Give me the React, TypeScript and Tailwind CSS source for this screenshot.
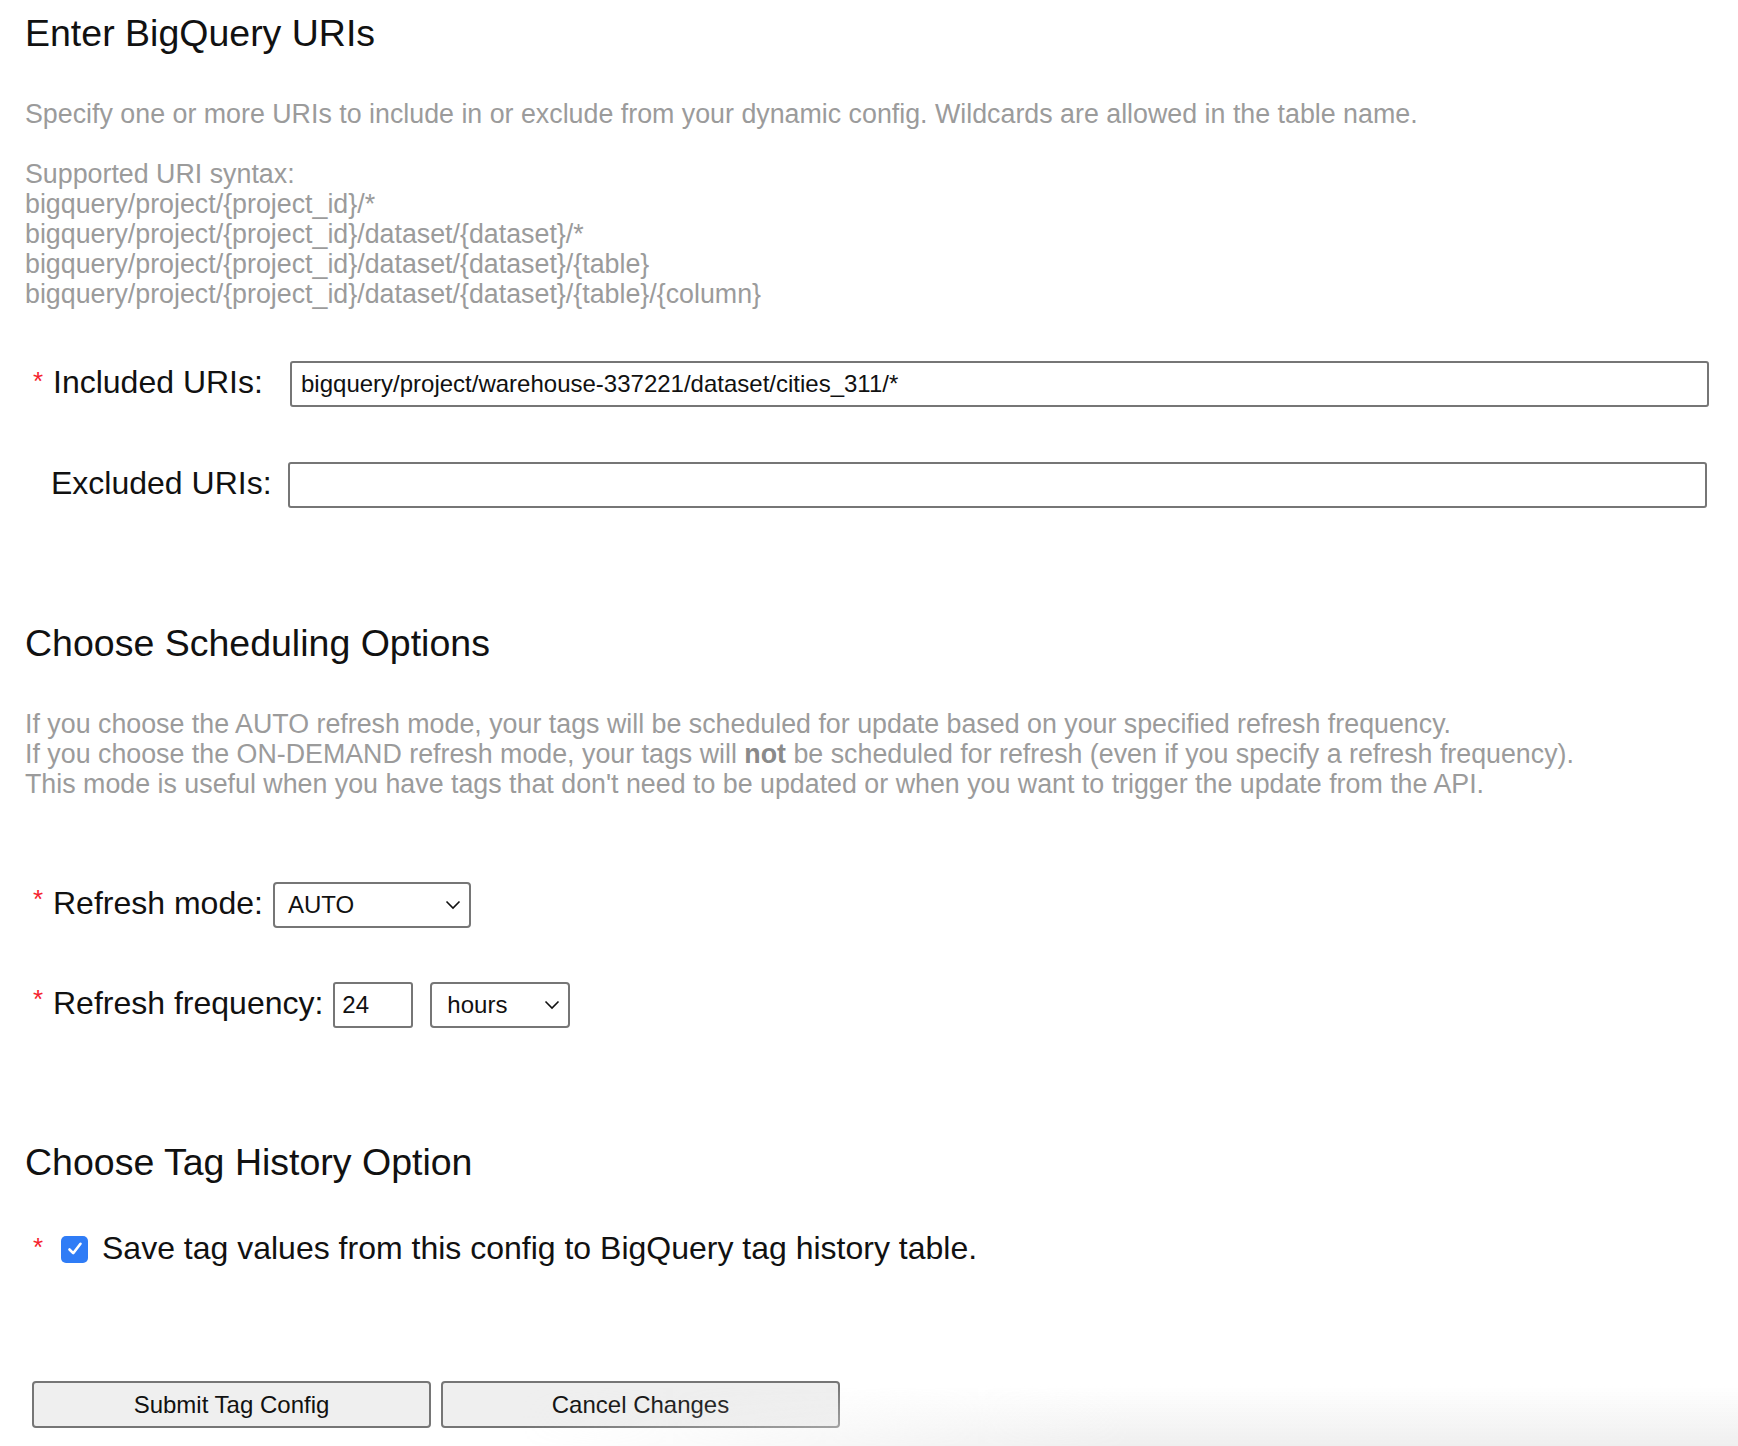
import React from "react";

const Req = () => (
  <span className="text-[#f5222d] text-[26px] leading-none w-[20px] self-start mt-[4px] inline-block">*</span>
);

const Chevron = () => (
  <svg width="16" height="10" viewBox="0 0 16 10" className="absolute right-[8px] top-1/2 -translate-y-1/2 pointer-events-none">
    <path d="M1.5 1.5 L8 8 L14.5 1.5" fill="none" stroke="#111" strokeWidth="1.6" />
  </svg>
);

export default function App() {
  return (
    <div
      className="relative min-h-[1446px] bg-white text-[#111] overflow-hidden"
      style={{ fontFamily: '"Liberation Sans", Arial, Helvetica, sans-serif' }}
    >
      <div className="pl-[25px] pt-[12px]">
        <h1 className="text-[37.5px] leading-[42px] font-normal">Enter BigQuery URIs</h1>
        <p className="mt-[45px] text-[26.8px] leading-[30px] text-[#9b9b9b]">
          Specify one or more URIs to include in or exclude from your dynamic config. Wildcards are allowed in the table name.
        </p>
        <div className="mt-[30px] text-[26.8px] leading-[30px] text-[#9b9b9b]">
          <div>Supported URI syntax:</div>
          <div>bigquery/project/{"{project_id}"}/*</div>
          <div>bigquery/project/{"{project_id}"}/dataset/{"{dataset}"}/*</div>
          <div>bigquery/project/{"{project_id}"}/dataset/{"{dataset}"}/{"{table}"}</div>
          <div>bigquery/project/{"{project_id}"}/dataset/{"{dataset}"}/{"{table}"}/{"{column}"}</div>
        </div>
      </div>

      <div className="mt-[52px] flex items-center pl-[33px] pr-[29px]">
        <div className="flex items-center w-[257px] shrink-0">
          <Req />
          <span className="text-[32px] leading-[36px] pb-[5px]">Included URIs:</span>
        </div>
        <div className="flex-1 h-[46px] border-2 border-[#767676] rounded-[3px] flex items-center pl-[9px] text-[24px]">
          bigquery/project/warehouse-337221/dataset/cities_311/*
        </div>
      </div>

      <div className="mt-[55px] flex items-center pl-[51px] pr-[31px]">
        <div className="w-[237px] shrink-0 text-[32px] leading-[36px] pb-[5px]">Excluded URIs:</div>
        <div className="flex-1 h-[46px] border-2 border-[#767676] rounded-[3px]" />
      </div>

      <div className="pl-[25px]">
        <h2 className="mt-[114px] text-[37.5px] leading-[42px] font-normal">Choose Scheduling Options</h2>
        <div className="mt-[45px] text-[26.8px] leading-[30px] text-[#9b9b9b]">
          <div>If you choose the AUTO refresh mode, your tags will be scheduled for update based on your specified refresh frequency.</div>
          <div>
            If you choose the ON-DEMAND refresh mode, your tags will <span className="font-bold text-[#8a8a8a]">not</span> be scheduled for refresh (even if you specify a refresh frequency).
          </div>
          <div>This mode is useful when you have tags that don't need to be updated or when you want to trigger the update from the API.</div>
        </div>
      </div>

      <div className="mt-[83px] flex items-center pl-[33px]">
        <Req />
        <span className="text-[32px] leading-[36px] pb-[5px]">Refresh mode:</span>
        <div className="relative ml-[10px] w-[198px] h-[46px] border-2 border-[#767676] rounded-[4px] flex items-center pl-[13px] text-[24px]">
          AUTO
          <Chevron />
        </div>
      </div>

      <div className="mt-[54px] flex items-center pl-[33px]">
        <Req />
        <span className="text-[32px] leading-[36px] pb-[5px]">Refresh frequency:</span>
        <div className="ml-[10px] w-[80px] h-[46px] border-2 border-[#767676] rounded-[3px] flex items-center pl-[7px] text-[24px]">
          24
        </div>
        <div className="relative ml-[17px] w-[140px] h-[46px] border-2 border-[#767676] rounded-[4px] flex items-center pl-[15px] text-[24px]">
          hours
          <Chevron />
        </div>
      </div>

      <div className="pl-[25px]">
        <h2 className="mt-[113px] text-[37.5px] leading-[42px] font-normal">Choose Tag History Option</h2>
      </div>

      <div className="mt-[47px] flex items-center pl-[33px]">
        <Req />
        <span className="ml-[8px] w-[27px] h-[27px] rounded-[5px] bg-[#2f7cf6] flex items-center justify-center">
          <svg width="18" height="18" viewBox="0 0 18 18">
            <path d="M3.5 9.5 L7.2 13.2 L14.5 3.8" fill="none" stroke="white" strokeWidth="2.6" strokeLinecap="round" strokeLinejoin="round" />
          </svg>
        </span>
        <span className="ml-[14px] text-[32px] leading-[36px] pb-[2px]">Save tag values from this config to BigQuery tag history table.</span>
      </div>

      <div className="mt-[113px] flex gap-[10px] pl-[32px]">
        <button className="w-[399px] h-[47px] bg-[#efefef] border-2 border-[#767676] rounded-[4px] text-[24px] text-[#111]">
          Submit Tag Config
        </button>
        <button className="w-[399px] h-[47px] bg-[#efefef] border-2 border-[#767676] rounded-[4px] text-[24px] text-[#111]">
          Cancel Changes
        </button>
      </div>

      <div className="pointer-events-none absolute left-0 right-0 bottom-0 h-[60px] bg-[linear-gradient(to_bottom,rgba(239,239,239,0),rgba(239,239,239,1))] [mask-image:linear-gradient(to_right,transparent_30%,black_65%)]" />
    </div>
  );
}
